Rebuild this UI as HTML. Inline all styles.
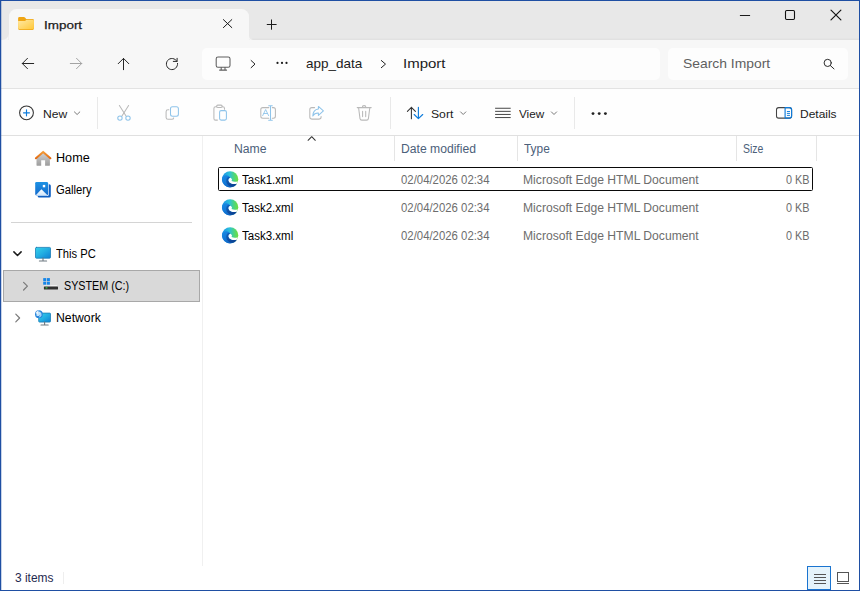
<!DOCTYPE html>
<html lang="en">
<head>
<meta charset="utf-8">
<title>Import</title>
<style>
*{box-sizing:border-box;margin:0;padding:0}
html,body{width:860px;height:591px;overflow:hidden;background:#fff}
body{font-family:"Liberation Sans",sans-serif;color:#1b1b1b;font-size:12px;position:relative}
.abs{position:absolute}
.t{position:absolute;white-space:nowrap;line-height:16px;transform-origin:0 50%}
svg{position:absolute;overflow:visible}
#win{position:absolute;left:0;top:0;width:860px;height:591px;overflow:hidden;background:#fff}
.bd{position:absolute;background:#1f4fa3;z-index:10}
/* title bar */
#titlebar{left:0;top:0;width:860px;height:39.6px;background:#e8e8e8}
#tab{left:8.5px;top:8.5px;width:240.7px;height:32px;background:#f7f7f7;border-radius:7.5px 7.5px 0 0}
#navbar{left:0;top:39.6px;width:860px;height:49.2px;background:#f7f7f7;border-bottom:1px solid #e3e3e3}
.box{background:#fdfdfd;border-radius:5px;height:32px;top:48px}
#cmdbar{left:0;top:88.8px;width:860px;height:47.2px;background:#fefefe;border-bottom:1px solid #e0e0e0}
.vsep{position:absolute;width:1px;background:#e9e9e9}
#side{left:0;top:136px;width:202px;height:440px;background:#fff}
#sidesel{left:3px;top:270px;width:197px;height:32px;background:#d9d9d9;border:1px solid #a8a8a8}
.hdr{color:#4b5a78}
.gray{color:#6d6d6d}
</style>
</head>
<body>
<div id="win">
  <div class="abs" id="titlebar"></div>
  <div class="abs" id="tab"></div>
  <div class="abs" id="navbar"></div>
  <div class="abs box" style="left:202px;width:458px"></div>
  <div class="abs box" style="left:668px;width:180px"></div>
  <div class="abs" id="cmdbar"></div>
  <div class="abs" id="side"></div>
  <svg style="left:0;top:0" width="860" height="40" viewBox="0 0 860 40">
<rect x="252" y="38.8" width="608" height=".8" fill="#dcdcdc"/>
<path d="M2 39.7 Q8.5 39.7 8.5 33.5 L8.5 39.7 Z" fill="#f7f7f7"/>
<path d="M249.2 35.8 Q249.2 39.7 253.2 39.7 L249.2 39.7 Z" fill="#f7f7f7"/>
</svg>
  <svg style="left:18px;top:16px" width="17" height="15" viewBox="0 0 17 15">
<defs><linearGradient id="fg" x1="0" y1="0" x2="1" y2="1"><stop offset="0" stop-color="#ffe9a6"/><stop offset="1" stop-color="#ffc838"/></linearGradient></defs>
<path d="M0.1 2.4 Q0.1 1 1.5 1 L5.8 1 Q6.5 1 7 1.5 L8.2 2.9 L14.6 2.9 Q15.9 2.9 15.9 4.3 L15.9 12.6 Q15.9 13.95 14.6 13.95 L1.5 13.95 Q0.1 13.95 0.1 12.6 Z" fill="#efa514"/>
<path d="M0.1 5.1 L6.4 5.1 Q7.1 5.1 7.6 4.6 L8.5 3.7 L14.6 3.7 Q15.9 3.7 15.9 5 L15.9 12 Q15.9 13.3 14.6 13.3 L1.5 13.3 Q0.1 13.3 0.1 12 Z" fill="url(#fg)"/>
</svg>
  <div class="t" style="left:43.70px;top:17.07px;font-size:11.2px;line-height:16px;color:#1b1b1b;transform:scaleX(1.2016);-webkit-text-stroke:.25px #1b1b1b;">Import</div>
  <svg style="left:0;top:0" width="860" height="40" viewBox="0 0 860 40" fill="none" stroke="#1b1b1b" stroke-width="1" stroke-linecap="round">
<path d="M223.4 19.6 L231.8 27.6 M231.8 19.6 L223.4 27.6"/>
<path d="M271.5 19.9 L271.5 29.3 M267.2 24.5 L276.2 24.5"/>
<path d="M740.3 15.5 L749.7 15.5"/>
<rect x="785.5" y="10.5" width="9" height="9" rx="1.2" stroke-width="1.1" stroke="#111"/>
<path d="M831 10.2 L840.9 19.9 M840.9 10.2 L831 19.9" stroke-width="1.15" stroke="#111"/>
</svg>
  <svg style="left:0;top:40px" width="860" height="50" viewBox="0 40 860 50" fill="none" stroke="#262626" stroke-width="1" stroke-linecap="round" stroke-linejoin="round">
<path d="M33.7 63.5 L22.4 63.5 M27.5 58.3 L22.3 63.5 L27.5 68.7"/>
<path d="M70.3 63.5 L81.7 63.5 M76.5 58.3 L81.7 63.5 L76.5 68.7" stroke="#a3a3a3"/>
<path d="M123.5 69.7 L123.5 58.4 M118.2 63.7 L123.5 58.4 L128.8 63.7"/>
<path d="M176.96 61.41 A5.6 5.6 0 1 0 177.57 63.41 M177.1 58.3 L177.1 61.4 L173.3 61.4"/>
<g stroke="#5e5e5e" stroke-width="1.05">
<rect x="216.2" y="57" width="13.8" height="10.2" rx="1.8"/>
<path d="M219.6 70.1 L226.6 70.1 M221.2 67.4 L221.2 70 M225 67.4 L225 70"/>
</g>
<path d="M251.1 60.5 L255 64.1 L251.1 67.7" stroke="#222"/>
<path d="M381.3 60.5 L385.5 64.1 L381.3 67.7" stroke="#222"/>
<g fill="#1b1b1b" stroke="none"><circle cx="277.5" cy="62.9" r="1.1"/><circle cx="282" cy="62.9" r="1.1"/><circle cx="286.5" cy="62.9" r="1.1"/></g>
<g stroke="#2a2a2a" stroke-width="1"><circle cx="827.7" cy="62.9" r="3.6"/><path d="M830.4 65.6 L834 68.9"/></g>
</svg>
  <div class="t" style="left:305.74px;top:54.33px;font-size:13.2px;line-height:20px;color:#1b1b1b;transform:scaleX(1.0229);">app_data</div>
  <div class="t" style="left:403.08px;top:54.23px;font-size:13.2px;line-height:20px;color:#1b1b1b;transform:scaleX(1.1361);">Import</div>
  <div class="t" style="left:682.94px;top:54.33px;font-size:13.2px;line-height:20px;color:#5f5f5f;transform:scaleX(1.0521);">Search Import</div>
  <svg style="left:0;top:90px" width="860" height="46" viewBox="0 90 860 46" fill="none" stroke-width="1.05" stroke-linecap="round" stroke-linejoin="round">
<!-- New -->
<circle cx="26.5" cy="112.8" r="6.9" stroke="#333"/>
<path d="M26.5 109.8 L26.5 115.8 M23.5 112.8 L29.5 112.8" stroke="#0f7cdb" stroke-width="1.15"/>
<path d="M74.4 111.9 L77.1 114.5 L79.8 111.9" stroke="#7a7a7a" stroke-width="1"/>
<!-- Cut -->
<g stroke="#8fc4ea">
<path d="M119.4 105.5 L126.2 116.2" stroke="#b9b9b9"/><path d="M128.6 105.5 L121.8 116.2" stroke="#b9b9b9"/>
<circle cx="119.95" cy="118.1" r="2.2"/><circle cx="128" cy="118.1" r="2.2"/>
</g>
<!-- Copy -->
<path d="M168.8 109.8 L168 109.8 Q166.1 109.8 166.1 111.7 L166.1 117.4 Q166.1 119.3 168 119.3 L171.8 119.3 Q173.5 119.3 173.7 117.9" stroke="#b9b9b9"/>
<rect x="170.5" y="106.7" width="7.9" height="9.5" rx="2" stroke="#8fc4ea"/>
<!-- Paste -->
<path d="M216.6 106.7 L215.6 106.7 Q213.9 106.7 213.9 108.4 L213.9 118.4 Q213.9 120.1 215.6 120.1 L217.4 120.1 M222.2 106.7 L222.8 106.7 Q224.5 106.7 224.5 108.4 L224.5 109.2" stroke="#b9b9b9"/>
<rect x="216.6" y="105.1" width="5.6" height="2.4" rx="1.2" stroke="#b9b9b9"/>
<rect x="219.6" y="110.6" width="6.8" height="9.5" rx="1.5" stroke="#8fc4ea"/>
<!-- Rename -->
<path d="M268.8 107.6 L262.8 107.6 Q260.8 107.6 260.8 109.6 L260.8 116.2 Q260.8 118.2 262.8 118.2 L268.8 118.2 M272.3 107.6 L273.4 107.6 Q275.4 107.6 275.4 109.6 L275.4 116.2 Q275.4 118.2 273.4 118.2 L272.3 118.2" stroke="#b9b9b9"/>
<path d="M270.5 105.9 L270.5 120.1 M268.7 105.7 L272.3 105.7 M268.7 120.3 L272.3 120.3" stroke="#8fc4ea"/>
<path d="M262.7 115.6 L265.65 109.5 L268.6 115.6 M263.8 113.5 L267.5 113.5" stroke="#8fc4ea" stroke-width=".9"/>
<!-- Share -->
<path d="M314.6 107.6 L311.8 107.6 Q309.8 107.6 309.8 109.6 L309.8 117.1 Q309.8 119.1 311.8 119.1 L319.1 119.1 Q321.1 119.1 321.1 117.1 L321.1 116.6" stroke="#b9b9b9"/>
<path d="M318.4 106.4 L323.4 110.9 L318.4 115.4 L318.4 113 Q314.6 112.8 312.8 116 Q313 109.4 318.4 108.9 Z" stroke="#8fc4ea"/>
<!-- Delete -->
<g stroke="#b9b9b9">
<path d="M357.2 107.6 L371.2 107.6 M362.3 107.4 Q362.3 105.6 364.1 105.6 Q365.9 105.6 365.9 107.4"/>
<path d="M358.6 107.8 L360 118.6 Q360.2 120.1 361.8 120.1 L366.6 120.1 Q368.2 120.1 368.4 118.6 L369.8 107.8"/>
<path d="M362.6 111.2 L362.6 116.6 M365.7 111.2 L365.7 116.6"/>
</g>
<!-- Sort -->
<path d="M411.4 118.7 L411.4 107.3 M407.4 111.4 L411.4 107.3 L415.4 111.4" stroke="#333"/>
<path d="M418.4 107.2 L418.4 118.6 M414.2 114.5 L418.4 118.7 L422.7 114.5" stroke="#0f7cdb" stroke-width="1.15"/>
<path d="M460.6 111.9 L463.2 114.5 L465.8 111.9" stroke="#7a7a7a" stroke-width="1"/>
<!-- View -->
<path d="M495.1 108.25 L510.7 108.25 M495.1 111.35 L510.7 111.35 M495.1 114.45 L510.7 114.45 M495.1 117.55 L510.7 117.55" stroke="#3c3c3c" stroke-width=".95" stroke-linecap="butt"/>
<path d="M551.4 111.9 L554 114.5 L556.6 111.9" stroke="#7a7a7a" stroke-width="1"/>
<!-- more -->
<g fill="#222" stroke="none"><circle cx="593" cy="113.6" r="1.45"/><circle cx="599.2" cy="113.6" r="1.45"/><circle cx="605.4" cy="113.6" r="1.45"/></g>
<!-- Details -->
<rect x="776.5" y="107.6" width="15.1" height="10.5" rx="2.2" stroke="#444"/>
<path d="M785.1 107.6 L785.1 118.1 M785.1 107.6 L789.4 107.6 Q791.6 107.6 791.6 109.8 L791.6 115.9 Q791.6 118.1 789.4 118.1 L785.1 118.1" stroke="#0f7cdb" stroke-width="1.15"/>
<path d="M787.3 111.5 L789.6 111.5 M787.3 113.4 L789.6 113.4 M787.3 115.4 L789.6 115.4" stroke="#0f7cdb" stroke-width=".95"/>
</svg>
  <div class="vsep" style="left:97px;top:97px;height:32px"></div>
  <div class="vsep" style="left:390px;top:97px;height:32px"></div>
  <div class="vsep" style="left:574px;top:97px;height:32px"></div>
  <div class="t" style="left:42.80px;top:105.92px;font-size:11.2px;line-height:16px;color:#1b1b1b;transform:scaleX(1.0814);">New</div>
  <div class="t" style="left:430.71px;top:105.92px;font-size:11.2px;line-height:16px;color:#1b1b1b;transform:scaleX(1.0875);">Sort</div>
  <div class="t" style="left:519.47px;top:105.92px;font-size:11.2px;line-height:16px;color:#1b1b1b;transform:scaleX(1.0471);">View</div>
  <div class="t" style="left:800.26px;top:105.92px;font-size:11.2px;line-height:16px;color:#1b1b1b;transform:scaleX(1.0707);">Details</div>
  <div class="abs" style="left:202px;top:136px;width:1px;height:430px;background:#f0f0f0"></div>
  <div class="abs" style="left:11px;top:222px;width:181px;height:1px;background:#d4d4d4"></div>
  <div class="abs" id="sidesel"></div>
  <svg style="left:0;top:136px" width="202" height="200" viewBox="0 136 202 200" fill="none" stroke-linecap="round" stroke-linejoin="round">
<defs>
<linearGradient id="scr" x1="0" y1="0" x2="1" y2="1"><stop offset="0" stop-color="#36d2ea"/><stop offset=".5" stop-color="#22aee2"/><stop offset="1" stop-color="#0f80d4"/></linearGradient>
<linearGradient id="gal" x1="0" y1="0" x2="0" y2="1"><stop offset="0" stop-color="#1d92e4"/><stop offset="1" stop-color="#146acc"/></linearGradient>
<linearGradient id="roof" x1="0" y1="151" x2="0" y2="159" gradientUnits="userSpaceOnUse"><stop offset="0" stop-color="#f6a23c"/><stop offset="1" stop-color="#e0650f"/></linearGradient>
<linearGradient id="wall" x1="0" y1="0" x2="0" y2="1"><stop offset="0" stop-color="#d2d2d2"/><stop offset="1" stop-color="#9c9c9c"/></linearGradient>
<linearGradient id="mtn" x1="0" y1="0" x2="0" y2="1"><stop offset="0" stop-color="#ffffff"/><stop offset="1" stop-color="#cfe6fb"/></linearGradient>
</defs>
<!-- Home -->
<path d="M36.5 158 L36.5 164.9 Q36.5 165.8 37.4 165.8 L41.2 165.8 L41.2 160.3 L45.1 160.3 L45.1 165.8 L49 165.8 Q49.9 165.8 49.9 164.9 L49.9 158 L43.2 152.6 Z" fill="url(#wall)"/>

<path d="M35.9 158.3 L43.15 151.9 L50.4 158.3" stroke="url(#roof)" stroke-width="2"/>
<!-- Gallery -->
<rect x="37.6" y="184.2" width="13.2" height="13.4" rx="1.6" fill="#0f5fc2"/>
<rect x="34.9" y="181.7" width="13.8" height="14.3" rx="1.6" fill="#fff"/>
<rect x="35.2" y="182" width="12.9" height="13.4" rx="1.3" fill="url(#gal)"/>
<path d="M35.5 195.4 L41.4 189.2 L47.8 195.4 Z" fill="url(#mtn)"/>
<rect x="42.8" y="184.9" width="2.4" height="2.4" fill="#fff"/>
<!-- chevrons -->
<path d="M13.9 251.9 L17.5 255.5 L21.1 251.9" stroke="#1b1b1b" stroke-width="1.5"/>
<path d="M23.6 282.4 L27.4 286.2 L23.6 290" stroke="#7a7a7a" stroke-width="1.2"/>
<path d="M15.8 314.2 L19.6 318 L15.8 321.8" stroke="#7a7a7a" stroke-width="1.2"/>
<!-- This PC -->
<rect x="35.5" y="247.4" width="15" height="10.8" rx=".9" fill="url(#scr)" stroke="#1a7db6" stroke-width=".8"/>
<path d="M43 258 L43 260.6 M39.4 261 L46.6 261" stroke="#6f7a82" stroke-width="1.1"/>
<!-- Drive -->
<rect x="43.2" y="278.1" width="3" height="3" fill="#1585e8"/><rect x="46.9" y="278.1" width="3" height="3" fill="#1585e8"/>
<rect x="43.2" y="281.7" width="3" height="3" fill="#1585e8"/><rect x="46.9" y="281.7" width="3" height="3" fill="#1585e8"/>
<path d="M50.6 284.9 L56.6 284.9 L58 286.6 L43.9 286.6 L43.9 285.6 L50.2 285.6 Z" fill="#f0f0f0"/>
<rect x="43.9" y="286.5" width="14.1" height="3.1" rx=".5" fill="#303030"/>
<rect x="45.6" y="287.3" width="1.8" height="1.1" fill="#3ee04a"/>
<!-- Network -->
<rect x="38.7" y="313.1" width="11.8" height="9" rx=".8" fill="url(#scr)" stroke="#1a7db6" stroke-width=".8"/>
<path d="M44.6 322 L44.6 324.6 M41 325 L48.2 325" stroke="#6f7a82" stroke-width="1.1"/>
<circle cx="38.9" cy="314.2" r="3.9" fill="#2a86dc"/>
<path d="M36.6 312.4 Q38.6 310.8 40.4 312 Q41.4 314 39.6 315.2 Q38 316.8 36.4 315.4 Z" fill="#d6f0ff" opacity=".9"/>
<path d="M35.6 313 Q36.4 310.6 39 310.4 Q37.4 312 37.6 314.2 Z" fill="#fff" opacity=".85"/><path d="M40.2 312.2 Q42 313 41.6 315.4 Q40.6 317.4 38.8 317.4 Q40.4 315.6 40.2 312.2 Z" fill="#bfe3ff" opacity=".8"/>
</svg>
  <div class="t" style="left:55.85px;top:149.74px;font-size:12px;line-height:16px;color:#000;transform:scaleX(1.0525);">Home</div>
  <div class="t" style="left:55.91px;top:182.04px;font-size:12px;line-height:16px;color:#000;transform:scaleX(0.9365);">Gallery</div>
  <div class="t" style="left:56.27px;top:245.54px;font-size:12px;line-height:16px;color:#000;transform:scaleX(0.9313);">This PC</div>
  <div class="t" style="left:63.94px;top:278.04px;font-size:12px;line-height:16px;color:#000;transform:scaleX(0.8967);">SYSTEM (C:)</div>
  <div class="t" style="left:56.18px;top:310.04px;font-size:12px;line-height:16px;color:#000;transform:scaleX(1.0186);">Network</div>
  <div class="abs" style="left:394px;top:136px;width:1px;height:25px;background:#e5e5e5"></div>
  <div class="abs" style="left:517px;top:136px;width:1px;height:25px;background:#e5e5e5"></div>
  <div class="abs" style="left:736px;top:136px;width:1px;height:25px;background:#e5e5e5"></div>
  <div class="abs" style="left:816px;top:136px;width:1px;height:25px;background:#e5e5e5"></div>
  <svg style="left:300px;top:134px" width="24" height="10" viewBox="300 134 24 10" fill="none" stroke="#333" stroke-width="1.05" stroke-linecap="round" stroke-linejoin="round"><path d="M308.1 140.3 L311.7 136.7 L315.3 140.3"/></svg>
  <div class="t" style="left:234.18px;top:140.64px;font-size:12px;line-height:16px;color:#4c607a;transform:scaleX(1.0164);">Name</div>
  <div class="t" style="left:401.09px;top:140.54px;font-size:12px;line-height:16px;color:#4c607a;transform:scaleX(1.0118);">Date modified</div>
  <div class="t" style="left:524.00px;top:140.54px;font-size:12px;line-height:16px;color:#4c607a;transform:scaleX(0.9901);">Type</div>
  <div class="t" style="left:742.71px;top:140.54px;font-size:12px;line-height:16px;color:#4c607a;transform:scaleX(0.8701);">Size</div>
  <div class="abs" style="left:218px;top:167px;width:595px;height:24px;border:1px solid #0a0a0a;border-radius:1.5px"></div>
  <svg style="left:221.86px;top:170.65px" width="16.3" height="16.5" viewBox="0 0 16.3 16.5">
<defs>
<linearGradient id="eA0" x1="0" y1="0" x2="1" y2="0"><stop offset="0" stop-color="#1a8ee6"/><stop offset=".45" stop-color="#2cc0dc"/><stop offset=".75" stop-color="#4fd67a"/><stop offset="1" stop-color="#6fe03c"/></linearGradient>
<linearGradient id="eB0" x1="0" y1="0" x2=".6" y2="1"><stop offset="0" stop-color="#1a8be4"/><stop offset=".6" stop-color="#1277d6"/><stop offset="1" stop-color="#0f5fbe"/></linearGradient>
<linearGradient id="eC0" x1="0" y1="0" x2="1" y2="1"><stop offset="0" stop-color="#1263bf"/><stop offset=".6" stop-color="#0c489b"/><stop offset="1" stop-color="#0b3f8c"/></linearGradient>
</defs>
<circle cx="8.15" cy="8.25" r="8.1" fill="url(#eA0)"/>
<path d="M0.25 6 Q2 3.9 4.6 4.2 Q7.4 4.6 8.2 6.7 Q6.4 7.4 6.4 9.2 Q6.6 11.4 9.2 12.4 Q12 13.6 15 12.4 A8.1 8.1 0 0 1 0.25 6 Z" fill="url(#eB0)"/>
<path d="M8.2 6.7 Q6.4 7.4 6.4 9.2 Q6.6 11.4 9.2 12.4 Q12 13.6 15 12.4 Q13.4 15.3 10 15.7 Q6.4 15.7 4.8 12.6 Q3.4 9.2 5.4 6.6 Q6.8 5.2 8.2 6.7 Z" fill="url(#eC0)"/>
<path d="M8.2 6.7 Q6.4 7.4 6.4 9.2 Q6.6 11.4 9.2 12.4 Q12 13.6 15 12.4 Q15.5 11.2 15.7 10.2 Q12.6 11.4 9.5 10 Q10.6 8.6 9.4 7.4 Q8.8 6.8 8.2 6.7 Z" fill="#fff"/>
</svg>
  <div class="t" style="left:241.96px;top:171.94px;font-size:12px;line-height:16px;color:#000;transform:scaleX(0.9608);">Task1.xml</div>
  <div class="t" style="left:400.78px;top:171.94px;font-size:12px;line-height:16px;color:#6d6d6d;transform:scaleX(0.9474);">02/04/2026 02:34</div>
  <div class="t" style="left:523.49px;top:171.94px;font-size:12px;line-height:16px;color:#6d6d6d;transform:scaleX(1.0116);">Microsoft Edge HTML Document</div>
  <div class="t" style="left:785.55px;top:171.94px;font-size:12px;line-height:16px;color:#6d6d6d;transform:scaleX(0.9045);">0 KB</div>
  <svg style="left:221.86px;top:198.65px" width="16.3" height="16.5" viewBox="0 0 16.3 16.5">
<defs>
<linearGradient id="eA1" x1="0" y1="0" x2="1" y2="0"><stop offset="0" stop-color="#1a8ee6"/><stop offset=".45" stop-color="#2cc0dc"/><stop offset=".75" stop-color="#4fd67a"/><stop offset="1" stop-color="#6fe03c"/></linearGradient>
<linearGradient id="eB1" x1="0" y1="0" x2=".6" y2="1"><stop offset="0" stop-color="#1a8be4"/><stop offset=".6" stop-color="#1277d6"/><stop offset="1" stop-color="#0f5fbe"/></linearGradient>
<linearGradient id="eC1" x1="0" y1="0" x2="1" y2="1"><stop offset="0" stop-color="#1263bf"/><stop offset=".6" stop-color="#0c489b"/><stop offset="1" stop-color="#0b3f8c"/></linearGradient>
</defs>
<circle cx="8.15" cy="8.25" r="8.1" fill="url(#eA1)"/>
<path d="M0.25 6 Q2 3.9 4.6 4.2 Q7.4 4.6 8.2 6.7 Q6.4 7.4 6.4 9.2 Q6.6 11.4 9.2 12.4 Q12 13.6 15 12.4 A8.1 8.1 0 0 1 0.25 6 Z" fill="url(#eB1)"/>
<path d="M8.2 6.7 Q6.4 7.4 6.4 9.2 Q6.6 11.4 9.2 12.4 Q12 13.6 15 12.4 Q13.4 15.3 10 15.7 Q6.4 15.7 4.8 12.6 Q3.4 9.2 5.4 6.6 Q6.8 5.2 8.2 6.7 Z" fill="url(#eC1)"/>
<path d="M8.2 6.7 Q6.4 7.4 6.4 9.2 Q6.6 11.4 9.2 12.4 Q12 13.6 15 12.4 Q15.5 11.2 15.7 10.2 Q12.6 11.4 9.5 10 Q10.6 8.6 9.4 7.4 Q8.8 6.8 8.2 6.7 Z" fill="#fff"/>
</svg>
  <div class="t" style="left:241.96px;top:199.94px;font-size:12px;line-height:16px;color:#000;transform:scaleX(0.9608);">Task2.xml</div>
  <div class="t" style="left:400.78px;top:199.94px;font-size:12px;line-height:16px;color:#6d6d6d;transform:scaleX(0.9474);">02/04/2026 02:34</div>
  <div class="t" style="left:523.49px;top:199.94px;font-size:12px;line-height:16px;color:#6d6d6d;transform:scaleX(1.0116);">Microsoft Edge HTML Document</div>
  <div class="t" style="left:785.55px;top:199.94px;font-size:12px;line-height:16px;color:#6d6d6d;transform:scaleX(0.9045);">0 KB</div>
  <svg style="left:221.86px;top:226.65px" width="16.3" height="16.5" viewBox="0 0 16.3 16.5">
<defs>
<linearGradient id="eA2" x1="0" y1="0" x2="1" y2="0"><stop offset="0" stop-color="#1a8ee6"/><stop offset=".45" stop-color="#2cc0dc"/><stop offset=".75" stop-color="#4fd67a"/><stop offset="1" stop-color="#6fe03c"/></linearGradient>
<linearGradient id="eB2" x1="0" y1="0" x2=".6" y2="1"><stop offset="0" stop-color="#1a8be4"/><stop offset=".6" stop-color="#1277d6"/><stop offset="1" stop-color="#0f5fbe"/></linearGradient>
<linearGradient id="eC2" x1="0" y1="0" x2="1" y2="1"><stop offset="0" stop-color="#1263bf"/><stop offset=".6" stop-color="#0c489b"/><stop offset="1" stop-color="#0b3f8c"/></linearGradient>
</defs>
<circle cx="8.15" cy="8.25" r="8.1" fill="url(#eA2)"/>
<path d="M0.25 6 Q2 3.9 4.6 4.2 Q7.4 4.6 8.2 6.7 Q6.4 7.4 6.4 9.2 Q6.6 11.4 9.2 12.4 Q12 13.6 15 12.4 A8.1 8.1 0 0 1 0.25 6 Z" fill="url(#eB2)"/>
<path d="M8.2 6.7 Q6.4 7.4 6.4 9.2 Q6.6 11.4 9.2 12.4 Q12 13.6 15 12.4 Q13.4 15.3 10 15.7 Q6.4 15.7 4.8 12.6 Q3.4 9.2 5.4 6.6 Q6.8 5.2 8.2 6.7 Z" fill="url(#eC2)"/>
<path d="M8.2 6.7 Q6.4 7.4 6.4 9.2 Q6.6 11.4 9.2 12.4 Q12 13.6 15 12.4 Q15.5 11.2 15.7 10.2 Q12.6 11.4 9.5 10 Q10.6 8.6 9.4 7.4 Q8.8 6.8 8.2 6.7 Z" fill="#fff"/>
</svg>
  <div class="t" style="left:241.96px;top:227.94px;font-size:12px;line-height:16px;color:#000;transform:scaleX(0.9608);">Task3.xml</div>
  <div class="t" style="left:400.78px;top:227.94px;font-size:12px;line-height:16px;color:#6d6d6d;transform:scaleX(0.9474);">02/04/2026 02:34</div>
  <div class="t" style="left:523.49px;top:227.94px;font-size:12px;line-height:16px;color:#6d6d6d;transform:scaleX(1.0116);">Microsoft Edge HTML Document</div>
  <div class="t" style="left:785.55px;top:227.94px;font-size:12px;line-height:16px;color:#6d6d6d;transform:scaleX(0.9045);">0 KB</div>
  <div class="t" style="left:14.50px;top:569.84px;font-size:12px;line-height:16px;color:#1f2a50;transform:scaleX(0.9960);">3 items</div>
  <div class="abs" style="left:63px;top:572px;width:1px;height:12px;background:#eeeeee"></div>
  <div class="abs" style="left:807px;top:566px;width:24px;height:24px;background:#e5f3fb;border:1px solid #1a74d0"></div>
  <svg style="left:800px;top:560px" width="60" height="31" viewBox="800 560 60 31" fill="none" stroke="#555" stroke-width="1" shape-rendering="crispEdges">
<path d="M814 574.5 L826 574.5 M814 577.5 L826 577.5 M814 580.5 L826 580.5 M814 583.5 L826 583.5"/>
<rect x="837.5" y="572.5" width="11" height="9"/>
<path d="M837 583.5 L849 583.5"/>
</svg>
  <div class="bd" style="left:0;top:0;width:860px;height:1px"></div>
  <div class="bd" style="left:0;top:590px;width:860px;height:1px"></div>
  <div class="bd" style="left:0;top:0;width:1px;height:591px"></div>
  <div class="bd" style="left:1px;top:0;width:1px;height:591px;opacity:.25"></div>
  <div class="bd" style="left:859px;top:0;width:1px;height:591px"></div>
</div>
</body>
</html>
